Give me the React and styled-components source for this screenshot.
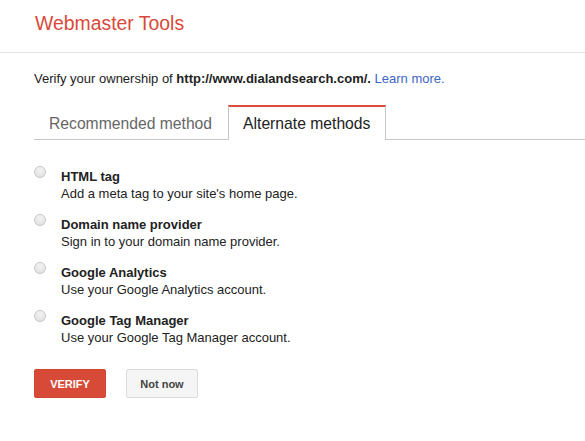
import React, { useState } from "react";
import styled, { createGlobalStyle } from "styled-components";

const Global = createGlobalStyle`
  html, body { margin: 0; padding: 0; background: #fff; }
  body { font-family: Arial, "Liberation Sans", sans-serif; color: #222; }
`;

const Header = styled.header`
  height: 53px;
  box-sizing: border-box;
  padding: 12px 35px 0;
  border-bottom: 1px solid #e5e5e5;
`;

const Title = styled.h1`
  margin: 0;
  font-size: 19.4px;
  line-height: 22px;
  font-weight: normal;
  color: #d9493a;
`;

const Content = styled.main`
  padding: 0 0 0 34px;
`;

const Intro = styled.p`
  margin: 18px 0 0;
  font-size: 13px;
  line-height: 16px;
  color: #222;
  b { font-weight: bold; }
  a { color: #3e66c8; text-decoration: none; }
`;

const TabBar = styled.div`
  display: flex;
  margin-top: 18px;
  border-bottom: 1px solid #c6c6c6;
`;

const Tab = styled.button`
  all: unset;
  box-sizing: border-box;
  padding: 0 15px 0 14px;
  font-family: Arial, "Liberation Sans", sans-serif;
  font-size: 15.7px;
  line-height: 31px;
  cursor: pointer;
  border-top: 2px solid ${(p) => (p.$active ? "#dd4b39" : "transparent")};
  border-left: 1px solid ${(p) => (p.$active ? "#c6c6c6" : "transparent")};
  border-right: 1px solid ${(p) => (p.$active ? "#c6c6c6" : "transparent")};
  background: #fff;
  color: ${(p) => (p.$active ? "#222" : "#666")};
  height: ${(p) => (p.$active ? "35px" : "34px")};
  margin-bottom: ${(p) => (p.$active ? "-1px" : "0")};
`;

const List = styled.div`
  margin-top: 29px;
  display: flex;
  flex-direction: column;
  gap: 15px;
`;

const Option = styled.label`
  display: flex;
  align-items: flex-start;
  cursor: pointer;
`;

const Radio = styled.span`
  flex: none;
  box-sizing: border-box;
  width: 12px;
  height: 12px;
  margin-top: -3px;
  margin-right: 15px;
  border-radius: 50%;
  border: 1px solid #c4c4c4;
  background: radial-gradient(circle at 50% 40%, #f2f2f2 0%, #e4e4e4 70%, #dadada 100%);
  box-shadow: inset 0 1px 1px rgba(255, 255, 255, 0.8);
  position: relative;
  &::after {
    content: "";
    position: absolute;
    inset: 3px;
    border-radius: 50%;
    background: ${(p) => (p.$checked ? "#444" : "transparent")};
  }
`;

const OptionText = styled.div`
  display: flex;
  flex-direction: column;
  gap: 1px;
  font-size: 13px;
  line-height: 16px;
`;

const OptionTitle = styled.div`
  font-weight: bold;
  color: #222;
`;

const OptionDesc = styled.div`
  color: #222;
`;

const Actions = styled.div`
  display: flex;
  gap: 20px;
  margin-top: 23px;
`;

const Button = styled.button`
  box-sizing: border-box;
  width: 72px;
  height: 29px;
  border-radius: 2px;
  font-family: Arial, "Liberation Sans", sans-serif;
  font-size: 11px;
  font-weight: bold;
  cursor: pointer;
  padding: 0;
  border: 1px solid ${(p) => (p.$primary ? "#d14836" : "#dcdcdc")};
  background: ${(p) => (p.$primary ? "#d84a38" : "#f5f5f5")};
  color: ${(p) => (p.$primary ? "#fff" : "#444")};
`;

const options = [
  { title: "HTML tag", desc: "Add a meta tag to your site's home page." },
  { title: "Domain name provider", desc: "Sign in to your domain name provider." },
  { title: "Google Analytics", desc: "Use your Google Analytics account." },
  { title: "Google Tag Manager", desc: "Use your Google Tag Manager account." },
];

export default function App() {
  const [tab, setTab] = useState(1);
  const [sel, setSel] = useState(-1);
  return (
    <>
      <Global />
      <Header>
        <Title>Webmaster Tools</Title>
      </Header>
      <Content>
        <Intro>
          Verify your ownership of <b>http://www.dialandsearch.com/.</b>{" "}
          <a href="#">Learn more.</a>
        </Intro>
        <TabBar>
          <Tab $active={tab === 0} onClick={() => setTab(0)}>Recommended method</Tab>
          <Tab $active={tab === 1} onClick={() => setTab(1)}>Alternate methods</Tab>
        </TabBar>
        <List>
          {options.map((o, i) => (
            <Option key={o.title} onClick={() => setSel(i)}>
              <Radio $checked={sel === i} />
              <OptionText>
                <OptionTitle>{o.title}</OptionTitle>
                <OptionDesc>{o.desc}</OptionDesc>
              </OptionText>
            </Option>
          ))}
        </List>
        <Actions>
          <Button $primary>VERIFY</Button>
          <Button>Not now</Button>
        </Actions>
      </Content>
    </>
  );
}
